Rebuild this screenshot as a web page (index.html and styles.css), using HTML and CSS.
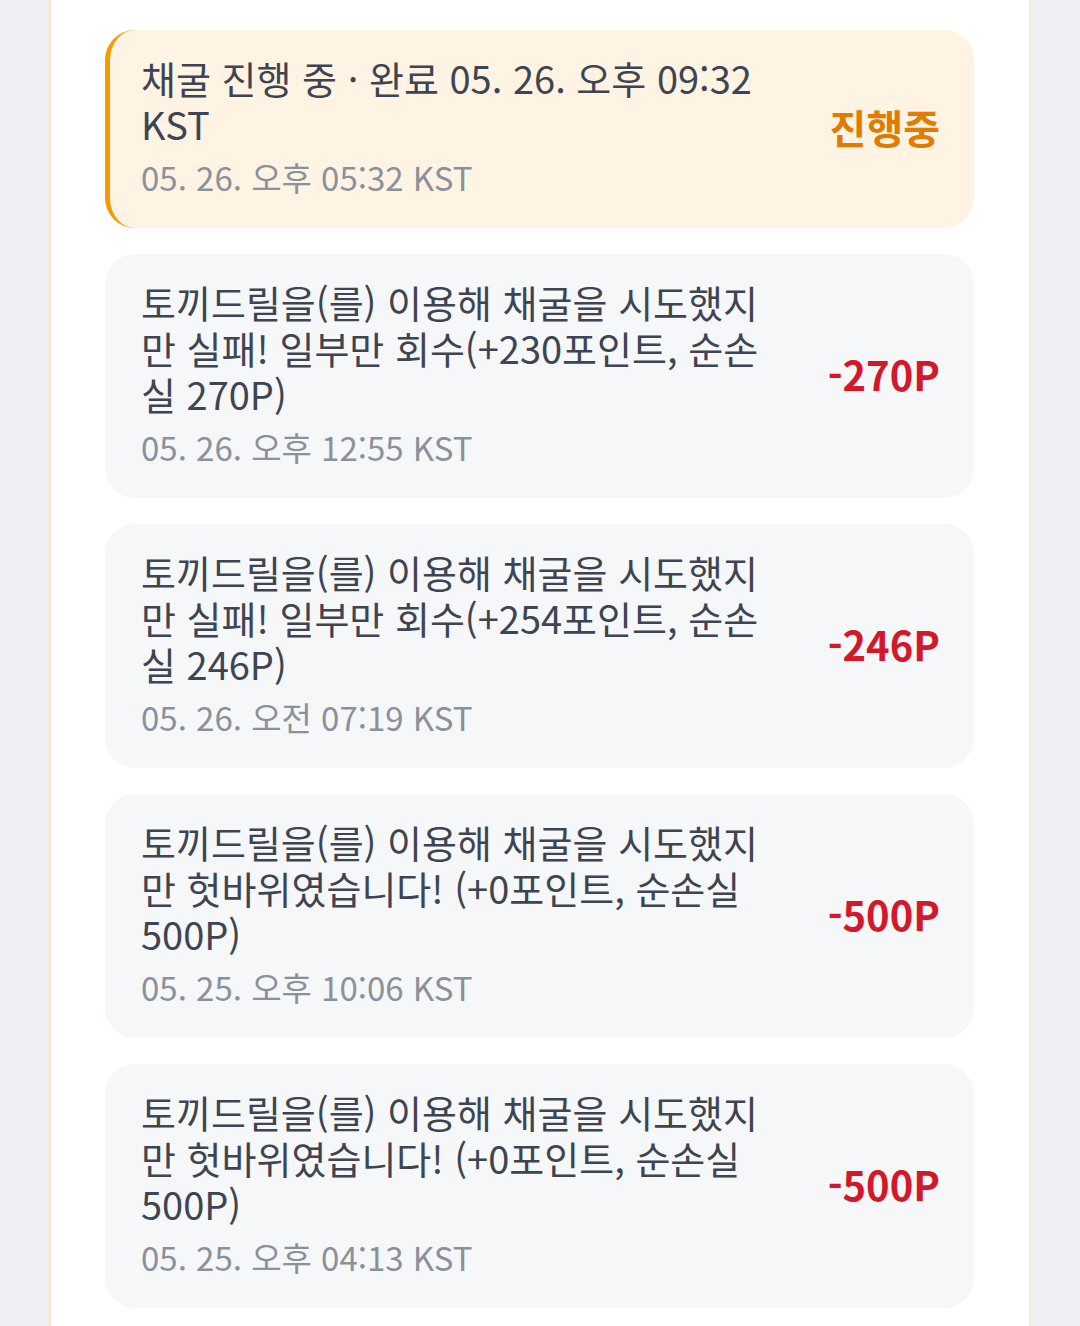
FILE: index.html
```html
<!DOCTYPE html>
<html lang="ko">

<head>
    <meta charset="UTF-8" />
    <meta name="viewport" content="width=device-width, initial-scale=1.0" />
    <title>채굴 기록</title>
    <link rel="stylesheet" href="styles.css">
</head>

<body>
    <div class="panel">
        <ul class="history">
            <!-- 진행 중인 채굴 -->
            <li class="item pending">
                <div class="info">
                    <p class="title">채굴 진행 중 · 완료 05. 26. 오후 09:32 KST</p>
                    <p class="date">05. 26. 오후 05:32 KST</p>
                </div>
                <span class="amount">진행중</span>
            </li>

            <li class="item">
                <div class="info">
                    <p class="title">토끼드릴을(를) 이용해 채굴을 시도했지만 실패! 일부만 회수(+230포인트, 순손실 270P)</p>
                    <p class="date">05. 26. 오후 12:55 KST</p>
                </div>
                <span class="amount minus">-270P</span>
            </li>

            <li class="item">
                <div class="info">
                    <p class="title">토끼드릴을(를) 이용해 채굴을 시도했지만 실패! 일부만 회수(+254포인트, 순손실 246P)</p>
                    <p class="date">05. 26. 오전 07:19 KST</p>
                </div>
                <span class="amount minus">-246P</span>
            </li>

            <li class="item">
                <div class="info">
                    <p class="title">토끼드릴을(를) 이용해 채굴을 시도했지만 헛바위였습니다! (+0포인트, 순손실 500P)</p>
                    <p class="date">05. 25. 오후 10:06 KST</p>
                </div>
                <span class="amount minus">-500P</span>
            </li>

            <li class="item">
                <div class="info">
                    <p class="title">토끼드릴을(를) 이용해 채굴을 시도했지만 헛바위였습니다! (+0포인트, 순손실 500P)</p>
                    <p class="date">05. 25. 오후 04:13 KST</p>
                </div>
                <span class="amount minus">-500P</span>
            </li>
        </ul>
    </div>
</body>

</html>
```

FILE: styles.css
```css
body {
    font-family: "Noto Sans CJK KR", "Noto Sans", sans-serif;
    background-color: #eef0f4;
    color: #3e4451;
    margin: 0;
}

.panel {
    margin: 0 48px;
    min-height: 1326px;
    background-color: #fff;
    border-left: 3px solid #f8ead3;
    border-right: 3px solid #f8ead3;
    padding: 30px 55px 30px 54px;
    box-sizing: border-box;
}

.history {
    list-style: none;
    margin: 0;
    padding: 0;
    display: flex;
    flex-direction: column;
    gap: 26px;
}

.item {
    display: flex;
    align-items: center;
    gap: 52px;
    padding: 25px 34px 29px 36px;
    background-color: #f6f7f9;
    border-radius: 30px;
}

.item.pending {
    background-color: #fff4e3;
    border-left: 5px solid #f59a00;
    padding-left: 31px;
}

.info {
    flex: 1;
    min-width: 0;
}

.title {
    margin: 0;
    font-size: 38px;
    line-height: 46px;
}

.date {
    margin: 8px 0 0;
    font-size: 33px;
    line-height: 44px;
    color: #8b919b;
}

.amount {
    font-size: 40px;
    font-weight: 700;
    color: #e07c00;
    white-space: nowrap;
}

.amount.minus {
    color: #d3182a;
}
```
